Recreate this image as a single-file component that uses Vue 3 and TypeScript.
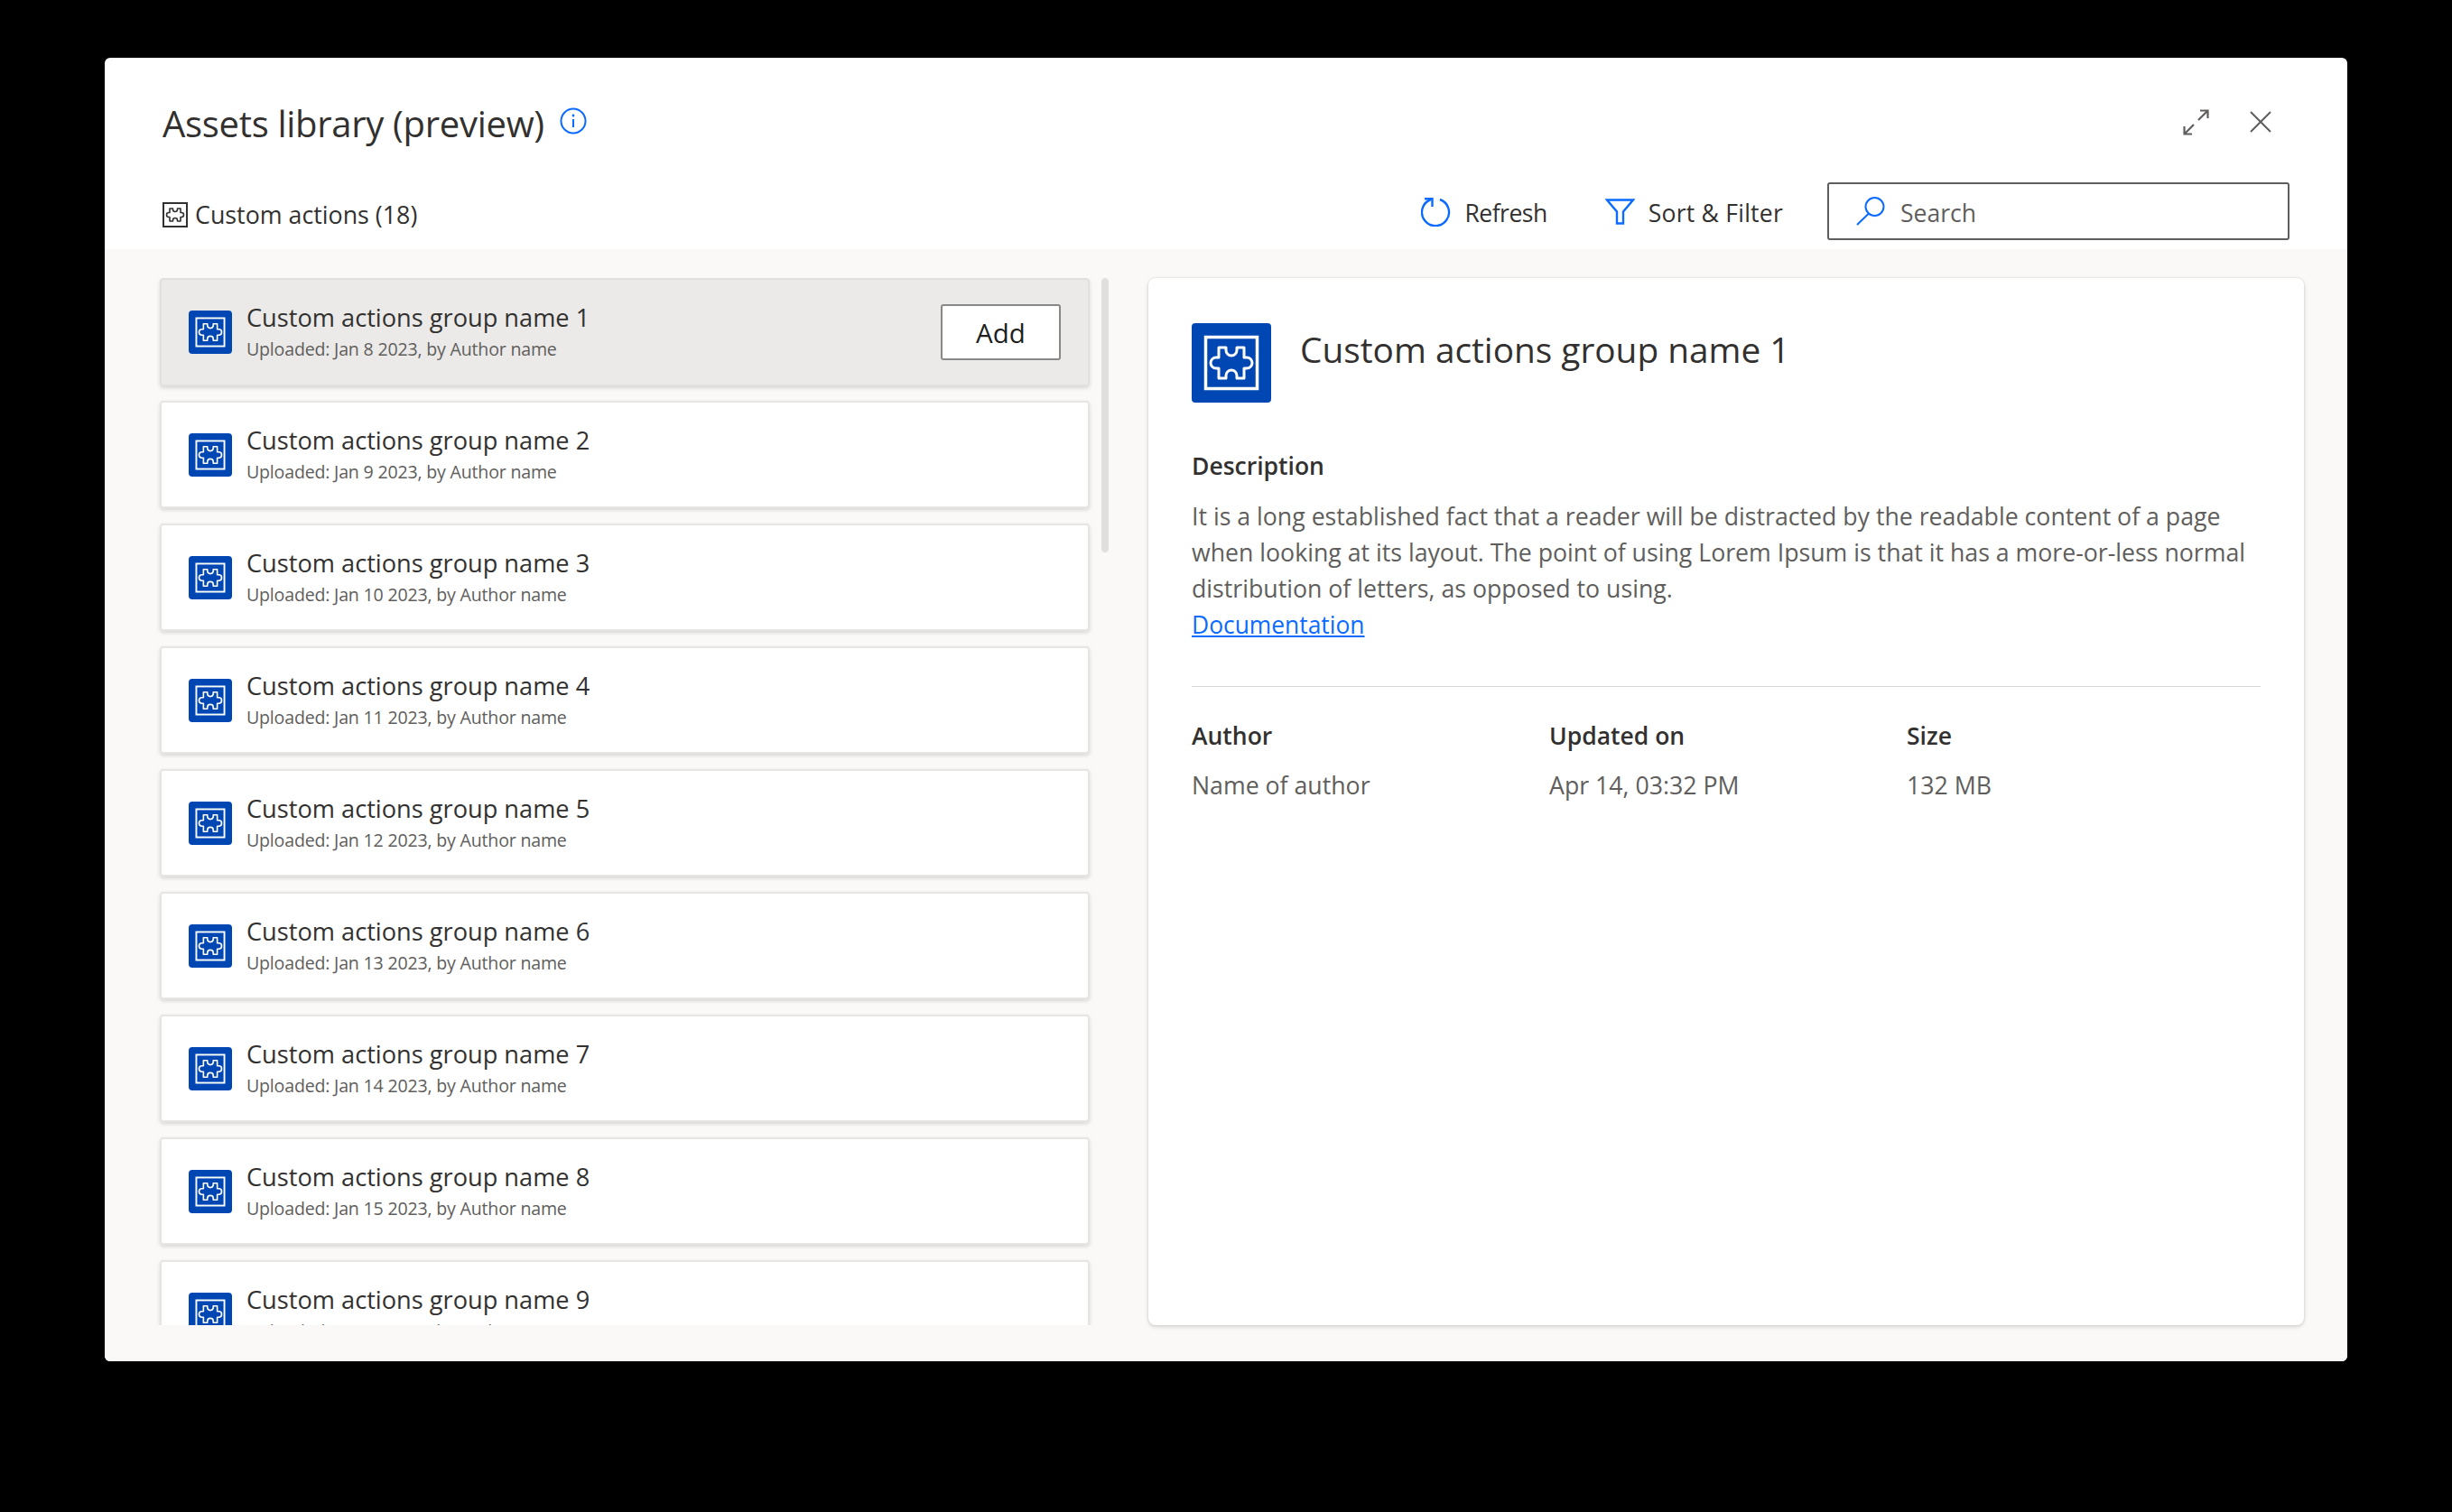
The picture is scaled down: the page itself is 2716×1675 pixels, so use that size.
<template>
  <div class="page">
    <svg width="0" height="0" class="defs">
      <symbol id="puzzle" viewBox="0 0 88 88">
        <rect x="15.500" y="15.500" width="57" height="57" fill="none" stroke="currentColor" stroke-width="3.500" />
        <path
          d="M30 27H38V30a6 6 0 0 0 12 0V27H58V38H61a6 6 0 0 1 0 12H58V61H50V58a6 6 0 0 0-12 0V61H30V50H27a6 6 0 0 1 0-12H30Z"
          fill="none"
          stroke="currentColor"
          stroke-width="3"
          stroke-linejoin="round"
        />
      </symbol>
    </svg>

    <div class="dialog">
      <header class="header">
        <div class="title-row">
          <h1>Assets library (preview)</h1>
          <svg class="info" width="30" height="30" viewBox="0 0 30 30" fill="none">
            <circle cx="15" cy="15" r="13.500" stroke="currentColor" stroke-width="2" />
            <path d="M15 13v9" stroke="currentColor" stroke-width="2" />
            <circle cx="15" cy="9" r="1.400" fill="currentColor" />
          </svg>
          <div class="window-actions">
            <svg width="29" height="29" viewBox="0 0 29 29" fill="none" stroke="#605e5c" stroke-width="2.200">
              <path d="M19 1.500H27.500V10M27.500 1.500 17 12M1.500 19V27.500H10M1.500 27.500 12 17" />
            </svg>
            <svg width="24" height="24" viewBox="0 0 24 24" fill="none" stroke="#605e5c" stroke-width="2">
              <path d="M1 1l22 22M23 1 1 23" />
            </svg>
          </div>
        </div>
        <div class="toolbar">
          <div class="crumb">
            <svg class="crumb-icon" width="28" height="28" viewBox="0 0 28 28" fill="none" stroke="currentColor">
              <rect x="1" y="1" width="26" height="26" stroke-width="2" />
              <path
                d="M8 7H11.500V8a2.500 2.500 0 0 0 5 0V7H20V11.500H21a2.500 2.500 0 0 1 0 5H20V21H16.500V20a2.500 2.500 0 0 0-5 0V21H8V16.500H7a2.500 2.500 0 0 1 0-5H8Z"
                stroke-width="1.600"
                stroke-linejoin="round"
              />
            </svg>
            <span>Custom actions (18)</span>
          </div>
          <button class="tool refresh">
            <svg width="33" height="33" viewBox="0 0 33 33" fill="none" stroke="currentColor" stroke-width="2.400">
              <path d="M21 3A15 15 0 1 1 11 3" />
              <path d="M4 2.200H12.500V11" />
            </svg>
            <span>Refresh</span>
          </button>
          <button class="tool filter">
            <svg width="33" height="29" viewBox="0 0 33 29" fill="none" stroke="currentColor" stroke-width="2.400">
              <path d="M2 1.500H31L20 14.500V27.500H13V14.500Z" />
            </svg>
            <span>Sort &amp; Filter</span>
          </button>
          <div class="search">
            <svg width="32" height="32" viewBox="0 0 32 32" fill="none" stroke="currentColor" stroke-width="2">
              <circle cx="20.500" cy="11" r="10" />
              <path d="M14 18.500 1 31" />
            </svg>
            <span>Search</span>
          </div>
        </div>
      </header>

      <main class="body">
        <div class="list">
          <div v-for="(item, index) in items" :key="item.name" class="card" :class="{ selected: index === 0 }">
            <div class="tile small">
              <svg width="48" height="48"><use href="#puzzle" /></svg>
            </div>
            <div class="card-text">
              <div class="card-name">{{ item.name }}</div>
              <div class="card-sub">{{ item.sub }}</div>
            </div>
            <button v-if="index === 0" class="add">Add</button>
          </div>
        </div>
        <div class="scrollbar"><div class="thumb"></div></div>

        <section class="detail">
          <div class="detail-head">
            <div class="tile large">
              <svg width="88" height="88"><use href="#puzzle" /></svg>
            </div>
            <h2>Custom actions group name 1</h2>
          </div>
          <h3>Description</h3>
          <p>
            It is a long established fact that a reader will be distracted by the readable content of a page<br />
            when looking at its layout. The point of using Lorem Ipsum is that it has a more-or-less normal<br />
            distribution of letters, as opposed to using.<br />
            <a href="#">Documentation</a>
          </p>
          <div class="rule"></div>
          <div class="meta">
            <div v-for="m in meta" :key="m.label">
              <div class="meta-label">{{ m.label }}</div>
              <div class="meta-value">{{ m.value }}</div>
            </div>
          </div>
        </section>
      </main>
    </div>
  </div>
</template>

<script setup lang="ts">
interface Item {
  name: string;
  sub: string;
}

const dates = ['Jan 8', 'Jan 9', 'Jan 10', 'Jan 11', 'Jan 12', 'Jan 13', 'Jan 14', 'Jan 15', 'Jan 16'];

const items: Item[] = dates.map((d, i) => ({
  name: `Custom actions group name ${i + 1}`,
  sub: `Uploaded: ${d} 2023, by Author name`
}));

const meta = [
  { label: 'Author', value: 'Name of author' },
  { label: 'Updated on', value: 'Apr 14, 03:32 PM' },
  { label: 'Size', value: '132 MB' }
];
</script>

<style>
html,
body {
  margin: 0;
  background: #000;
}
</style>

<style scoped>
.page {
  box-sizing: border-box;
  width: 2716px;
  height: 1675px;
  padding: 64px 116px 167px;
  background: #000;
  font-family: "Open Sans", "Noto Sans", sans-serif;
  color: #323130;
}

.defs {
  position: absolute;
}

.dialog {
  display: flex;
  flex-direction: column;
  height: 100%;
  background: #fff;
  border-radius: 6px;
  overflow: hidden;
}

.header {
  height: 212px;
  box-sizing: border-box;
  padding: 0 64px;
  flex-shrink: 0;
}

.title-row {
  display: flex;
  align-items: center;
  box-sizing: border-box;
  height: 138px;
  padding-top: 6px;
}

h1 {
  margin: 0;
  font-size: 40px;
  font-weight: 500;
  letter-spacing: -0.3px;
}

.info {
  margin: -4px 0 0 17px;
  color: #0b6aff;
}

.window-actions {
  display: flex;
  align-items: center;
  gap: 45px;
  margin-left: auto;
  margin-right: 20px;
  margin-top: -2px;
}

.toolbar {
  display: flex;
  align-items: center;
  height: 64px;
}

.crumb {
  display: flex;
  align-items: center;
  gap: 8px;
  margin-right: auto;
  font-size: 26.800px;
  margin-top: 7px;
  color: #323130;
}

.crumb-icon {
  color: #323130;
}

.tool {
  display: flex;
  align-items: center;
  gap: 15px;
  padding: 0;
  margin-right: 50px;
  border: none;
  background: none;
  font: inherit;
  font-size: 26.500px;
  color: #323130;
}

.tool span,
.search span {
  position: relative;
  top: 2px;
}

.tool.refresh {
  margin-right: 64px;
  letter-spacing: -0.5px;
}

.tool.filter {
  margin-right: 49px;
  letter-spacing: 0.25px;
}

.tool svg {
  color: #0b6aff;
}

.search {
  box-sizing: border-box;
  display: flex;
  align-items: center;
  gap: 17px;
  width: 512px;
  height: 64px;
  padding-left: 30px;
  border: 2px solid #605e5c;
  border-radius: 3px;
  font-size: 26.500px;
  color: #605e5c;
}

.search svg {
  color: #0b6aff;
}

.body {
  flex: 1;
  display: flex;
  min-height: 0;
  padding: 32px 48px 40px 61px;
  background: #faf9f8;
}

.list {
  display: flex;
  flex-direction: column;
  gap: 17px;
  width: 1030px;
  flex-shrink: 0;
  overflow: hidden;
  box-sizing: content-box;
  margin: 0 -5px;
  padding: 0 5px;
}

.card {
  display: flex;
  align-items: center;
  flex-shrink: 0;
  box-sizing: border-box;
  height: 119px;
  padding: 0 30px;
  background: #fff;
  border: 2px solid #e6e5e3;
  border-radius: 4px;
  box-shadow: 0 2px 4px rgba(0, 0, 0, 0.14);
}

.card.selected {
  height: 120px;
  margin-bottom: -1px;
  background: #ebeae9;
  border-color: #e1e0de;
}

.tile {
  display: flex;
  flex-shrink: 0;
  background: #0047b3;
  color: #fff;
  border-radius: 4px;
}

.tile.small {
  width: 48px;
  height: 48px;
}

.tile.large {
  width: 88px;
  height: 88px;
}

.card-text {
  flex: 1;
  margin-left: 16px;
  padding-top: 2px;
}

.selected .card-text {
  padding-top: 0;
}

.card-name {
  font-size: 27.200px;
  font-weight: 500;
  line-height: 36px;
  margin-top: -2px;
}

.card-sub {
  font-size: 19.600px;
  letter-spacing: -0.2px;
  line-height: 28px;
  margin-top: 3px;
  color: #605e5c;
}

.add {
  width: 133px;
  height: 62px;
  background: #fff;
  border: 2px solid #8a8886;
  border-radius: 3px;
  font: inherit;
  font-size: 29.500px;
  font-weight: 500;
  color: #201f1e;
}

.scrollbar {
  flex-shrink: 0;
  width: 8px;
  margin: 0 44px 0 13px;
}

.thumb {
  height: 304px;
  background: #e1dfdd;
  border-radius: 4px;
}

.detail {
  flex: 1;
  min-width: 0;
  box-sizing: border-box;
  padding: 50px 48px;
  background: #fff;
  border-radius: 8px;
  box-shadow: 0 0 3px rgba(0, 0, 0, 0.1), 0 2px 5px rgba(0, 0, 0, 0.14);
}

.detail-head {
  display: flex;
  align-items: flex-start;
  gap: 32px;
}

h2 {
  margin: 5px 0 0;
  font-size: 38.800px;
  font-weight: 500;
  line-height: 48px;
}

h3 {
  margin: 50px 0 0;
  font-size: 26.500px;
  font-weight: 600;
  line-height: 40px;
}

p {
  margin: 16px 0 0;
  font-size: 26.700px;
  line-height: 40px;
  color: #605e5c;
}

a {
  font-size: 26.400px;
  color: #0b6aff;
}

.rule {
  height: 1px;
  margin-top: 48px;
  background: #d8d6d4;
}

.meta {
  display: grid;
  grid-template-columns: 396px 396px auto;
  margin-top: 34px;
}

.meta-label {
  font-size: 26.500px;
  font-weight: 600;
  line-height: 40px;
}

.meta-value {
  margin-top: 15px;
  font-size: 26.700px;
  line-height: 40px;
  color: #605e5c;
}
</style>
